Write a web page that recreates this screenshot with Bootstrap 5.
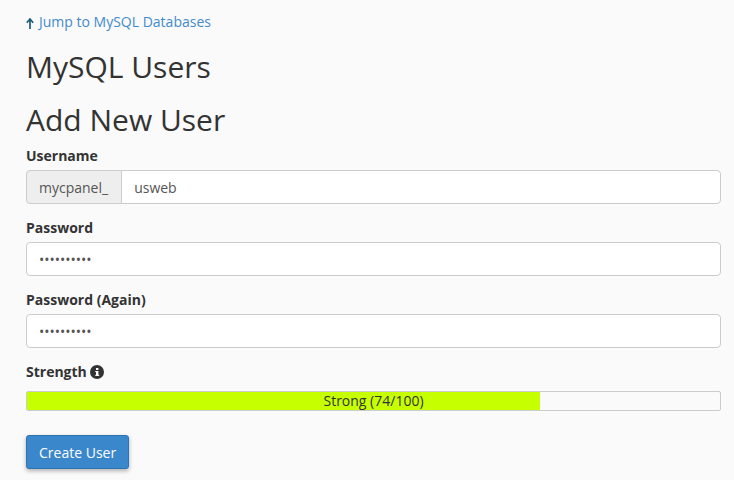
<!doctype html>
<html lang="en"><head><meta charset="utf-8">
<link rel="stylesheet" href="https://cdn.jsdelivr.net/npm/bootstrap@5.3.0/dist/css/bootstrap.min.css">
<style>
html,body{height:100%}
body{background:#fafafa;color:#333;font-family:"Open Sans",sans-serif;font-size:14px;overflow:hidden}
.pg{padding:12px 13px 0 26px}
.jump{color:#428bca;text-decoration:none;font-size:14px;line-height:20px;display:flex;align-items:center;gap:5px}
.jump svg{margin-top:3px}
.h-main{font-size:30px;font-weight:400;line-height:33px;margin:18px 0 0;color:#333}
.h-sub{font-size:30px;font-weight:400;line-height:33px;margin:20px 0 0;color:#333}
.fld{margin-top:10px;margin-bottom:0}
.lbl{font-weight:700;font-size:14px;line-height:20px;margin-bottom:4px;display:block}
.fc{height:34px;border:1px solid #ccc;border-radius:4px;font-size:14px;color:#555;padding:6px 12px;background:#fff;box-shadow:none}
.pre{height:34px;background:#eee;border:1px solid #ccc;color:#555;font-size:14px;padding:6px 13px 6px 12px;border-radius:4px 0 0 4px}
.gap2{margin-top:14px}
.lbl-str{margin-bottom:9px;gap:3px}
.meter{height:20px;border:1px solid #ccc;background:#fafafa;border-radius:2px;position:relative;overflow:hidden}
.meter-fill{height:100%;background:#c6ff00}
.meter-txt{position:absolute;inset:0;text-align:center;line-height:18px;font-size:14px;color:#333}
.cta{margin-top:24px;background:#3a87cc;border:1px solid #2e74b5;color:#fff;font-size:14px;padding:6px 12px;height:34px;border-radius:3px;box-shadow:0 2px 4px rgba(0,0,0,.3)}
</style></head><body>
<div class="pg">
<a class="jump" href="#"><svg width="8" height="11" viewBox="0 0 8 11"><path d="M4 11V2M.8 4.8L4 1l3.2 3.8" fill="none" stroke="#1c5f78" stroke-width="1.7"/></svg>Jump to MySQL Databases</a>
<h1 class="h-main">MySQL Users</h1>
<h2 class="h-sub">Add New User</h2>
<form>
<div class="fld"><label class="lbl" for="u">Username</label>
<div class="input-group"><span class="input-group-text pre">mycpanel_</span><input id="u" class="form-control fc" value="usweb"></div></div>
<div class="fld gap2"><label class="lbl" for="p">Password</label><input id="p" type="password" class="form-control fc" value="aaaaaaaaaa"></div>
<div class="fld gap2"><label class="lbl" for="q">Password (Again)</label><input id="q" type="password" class="form-control fc" value="aaaaaaaaaa"></div>
<div class="fld gap2"><span class="lbl lbl-str d-flex align-items-center">Strength <svg width="14" height="14" viewBox="0 0 14 14"><circle cx="7" cy="7" r="7" fill="#333"/><rect x="6" y="6" width="2.4" height="4.6" fill="#fff"/><rect x="5.2" y="9.8" width="4" height="1.1" fill="#fff"/><rect x="5.2" y="6" width="2" height="1" fill="#fff"/><rect x="6" y="3" width="2.4" height="2" fill="#fff"/></svg></span>
<div class="meter"><div class="meter-fill" style="width:74%"></div><div class="meter-txt">Strong (74/100)</div></div></div>
<button type="button" class="btn cta">Create User</button>
</form>
</div>
</body></html>
